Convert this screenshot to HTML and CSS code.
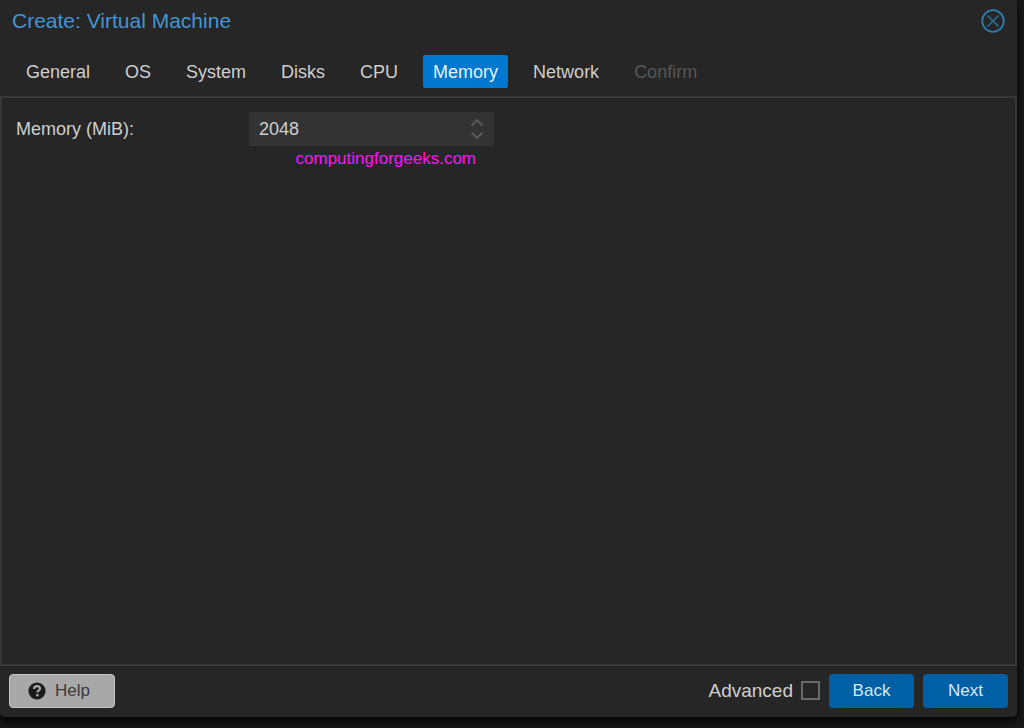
FILE: index.html
```
<!DOCTYPE html>
<html lang="en">

<head>
    <meta charset="utf-8">
    <meta name="viewport" content="width=device-width, initial-scale=1">
    <title>Create: Virtual Machine</title>
    <link rel="stylesheet" href="styles.css">
</head>

<body>
    <form class="window">
        <header class="title-bar">
            <h1 class="title">Create: Virtual Machine</h1>
            <button type="button" class="close" aria-label="Close">
                <svg width="24" height="24" viewBox="0 0 24 24" fill="none" stroke="#2b7fad">
                    <circle cx="12" cy="12" r="10.8" stroke-width="1.8" />
                    <path d="M6.5 6.5l11 11M17.5 6.5l-11 11" stroke="#286c91" stroke-width="1.7" />
                </svg>
            </button>
        </header>

        <nav class="tabs">
            <button type="button" class="tab">General</button>
            <button type="button" class="tab">OS</button>
            <button type="button" class="tab">System</button>
            <button type="button" class="tab">Disks</button>
            <button type="button" class="tab">CPU</button>
            <button type="button" class="tab active">Memory</button>
            <button type="button" class="tab">Network</button>
            <button type="button" class="tab" disabled>Confirm</button>
        </nav>

        <main class="panel">
            <div class="row">
                <label class="label" for="memory">Memory (MiB):</label>
                <div class="field">
                    <div class="spinner">
                        <input id="memory" class="spinner-input" type="text" inputmode="numeric" value="2048">
                        <svg class="arrows" width="14" height="22" viewBox="0 0 14 22" fill="none" stroke="#585858" stroke-width="2">
                            <path d="M1.5 7.5L7 2l5.5 5.5" />
                            <path d="M1.5 14.5L7 20l5.5-5.5" />
                        </svg>
                    </div>
                    <p class="watermark">computingforgeeks.com</p>
                </div>
            </div>
        </main>

        <footer class="footer">
            <button type="button" class="btn help">
                <svg width="18" height="18" viewBox="0 0 18 18">
                    <circle cx="9" cy="9" r="8.6" fill="#1c1c1c" />
                    <path d="M6 6.9C6.2 5.1 7.4 4.2 9.1 4.2c1.7 0 2.9 1 2.9 2.4 0 2-2.7 2-2.7 4" fill="none" stroke="#a8a8a8" stroke-width="2.2" />
                    <path d="M8.1 12h2.4v2.3H8.1z" fill="#a8a8a8" />
                </svg>
                <span>Help</span>
            </button>
            <div class="actions">
                <div class="option">
                    <label class="advanced" for="advanced">Advanced</label>
                    <input type="checkbox" id="advanced" class="check">
                </div>
                <button type="button" class="btn primary">Back</button>
                <button type="button" class="btn primary">Next</button>
            </div>
        </footer>
    </form>
</body>

</html>
```

FILE: styles.css
```
* {
    box-sizing: border-box;
}

body {
    margin: 0;
    height: 100vh;
    padding: 0 7px 11px 0;
    background: #181818;
    color: #cfcfcf;
    font-family: "Liberation Sans", Arial, sans-serif;
    font-size: 18px;
    line-height: 22px;
    overflow: hidden;
}

button,
input {
    font: inherit;
    color: inherit;
}

button {
    border: 0;
    background: none;
    cursor: pointer;
}

.window {
    display: flex;
    flex-direction: column;
    height: 100%;
    background: #262626;
    border-radius: 0 0 5px 5px;
    box-shadow: 0 4px 10px #000;
}

.title-bar {
    display: flex;
    align-items: center;
    justify-content: space-between;
    height: 42px;
    padding: 0 12px;
}

.title {
    margin: 0;
    color: #4495d4;
    font-size: 21px;
    font-weight: normal;
}

.close {
    display: flex;
    padding: 0;
}

.tabs {
    display: flex;
    gap: 15px;
    padding: 13px 16px 8px;
}

.tab {
    height: 33px;
    padding: 0 10px;
    border-radius: 2px;
}

.tab.active {
    background: #0078d0;
    color: #e6f1fa;
}

.tab:disabled {
    color: #565656;
    cursor: default;
}

.panel {
    flex: 1;
    padding: 14px;
    border: 2px solid #383838;
}

.row {
    display: flex;
}

.label {
    width: 233px;
    line-height: 34px;
}

.field {
    width: 245px;
}

.spinner {
    display: flex;
    align-items: center;
    height: 34px;
    padding-right: 10px;
    background: #333;
}

.spinner-input {
    flex: 1;
    min-width: 0;
    height: 34px;
    padding: 0 10px;
    border: 0;
    background: none;
    outline: 0;
}

.watermark {
    margin: 2px 18px;
    color: #ff10fc;
    font-size: 17px;
    text-align: right;
}

.footer {
    display: flex;
    align-items: center;
    justify-content: space-between;
    height: 51px;
    padding: 0 9px 2px;
}

.btn {
    height: 34px;
    border-radius: 4px;
    font-size: 17px;
}

.help {
    display: flex;
    align-items: center;
    gap: 9px;
    width: 106px;
    padding: 0 18px;
    border: 1px solid #c4c4c4;
    background: #a8a8a8;
    color: #383838;
}

.actions {
    display: flex;
    align-items: center;
    gap: 9px;
}

.option {
    display: flex;
    align-items: center;
    gap: 8px;
}

.advanced {
    font-size: 19px;
}

.check {
    appearance: none;
    width: 19px;
    height: 19px;
    margin: 0;
    border: 2px solid #6a6a6a;
}

.primary {
    width: 85px;
    background: #0060a6;
    color: #d9e7f2;
}
```
